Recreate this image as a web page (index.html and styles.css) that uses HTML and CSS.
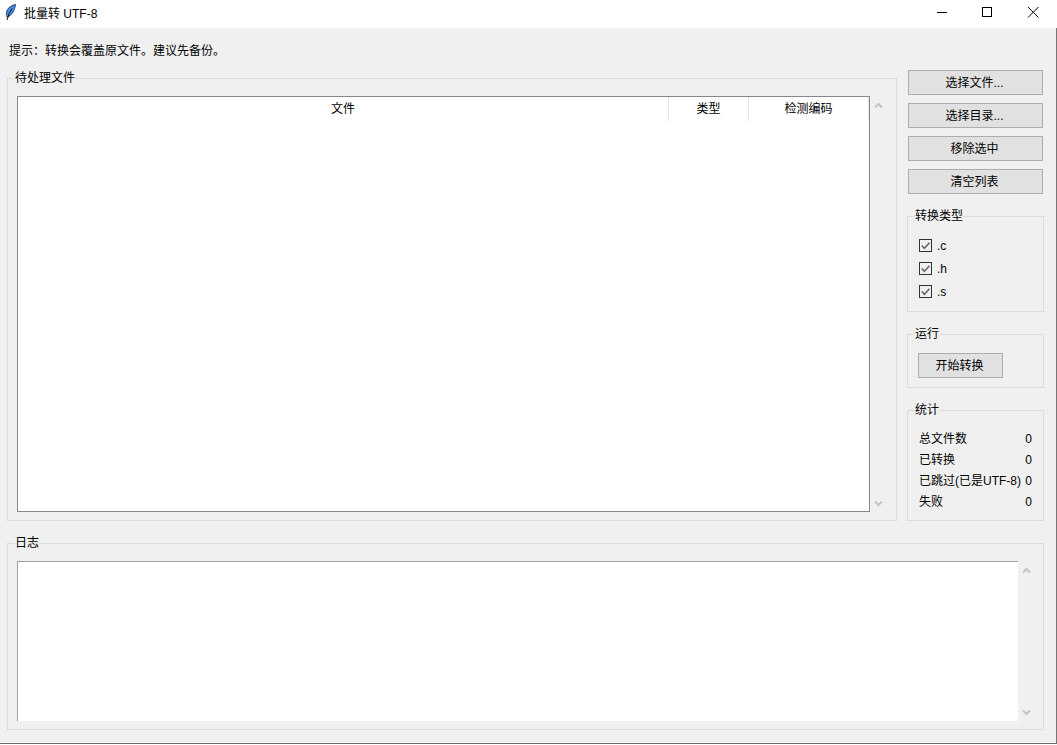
FILE: index.html
```html
<!DOCTYPE html>
<html lang="zh-CN">
<head>
    <meta charset="UTF-8">
    <meta name="viewport" content="width=device-width, initial-scale=1.0">
    <title>批量转 UTF-8</title>
    <link rel="stylesheet" href="styles.css">
</head>
<body>
    <div class="window">
        <div class="titlebar">
            <svg class="app-icon" width="12" height="20" viewBox="0 0 12 20">
                <path d="M10.500 0.500C7 1 2.800 3.500 1.700 7.300C1.200 9.300 1.300 11.300 2 13C4.800 12.300 7.300 10 8.600 7C9.600 4.800 10.300 2.500 10.500 0.500Z" fill="#3f93f2" stroke="#1a2530" stroke-width="0.800"/>
                <path d="M7 4.500L4.200 9.500L2 16" fill="none" stroke="#0b0f14" stroke-width="1"/>
            </svg>
            <span class="title-text">批量转 UTF-8</span>
            <div class="window-controls">
                <svg class="control" width="46" height="28" viewBox="0 0 46 28"><path d="M17 12.500H27" stroke="#000" fill="none"/></svg>
                <svg class="control" width="46" height="28" viewBox="0 0 46 28"><rect x="16.500" y="7.500" width="9" height="9" stroke="#000" fill="none"/></svg>
                <svg class="control" width="46" height="28" viewBox="0 0 46 28"><path d="M16 7L26.500 17.500M26.500 7L16 17.500" stroke="#000" fill="none"/></svg>
            </div>
        </div>

        <div class="content">
            <p class="hint">提示：转换会覆盖原文件。建议先备份。</p>

            <div class="top-row">
                <fieldset class="group files-group">
                    <legend>待处理文件</legend>
                    <div class="list-wrap">
                        <div class="file-table">
                            <div class="table-head">
                                <div class="head-cell">文件</div>
                                <div class="head-cell">类型</div>
                                <div class="head-cell">检测编码</div>
                            </div>
                        </div>
                        <div class="scroll-col">
                            <svg width="9" height="7" viewBox="0 0 9 7"><path d="M1 5.500L4.500 2L8 5.500" fill="none" stroke="#c4c4c4" stroke-width="2"/></svg>
                            <svg width="9" height="7" viewBox="0 0 9 7"><path d="M1 1.500L4.500 5L8 1.500" fill="none" stroke="#c4c4c4" stroke-width="2"/></svg>
                        </div>
                    </div>
                </fieldset>

                <div class="side">
                    <div class="side-buttons">
                        <button class="btn">选择文件...</button>
                        <button class="btn">选择目录...</button>
                        <button class="btn">移除选中</button>
                        <button class="btn">清空列表</button>
                    </div>

                    <fieldset class="group types-group">
                        <legend>转换类型</legend>
                        <label class="check-row">
                            <svg class="check-box" width="13" height="13" viewBox="0 0 13 13"><rect x="0.500" y="0.500" width="12" height="12" fill="none" stroke="#333"/><path d="M2.800 6.500L5.300 9.300L10.500 3.800" fill="none" stroke="#666" stroke-width="1.600"/></svg>
                            <span>.c</span>
                        </label>
                        <label class="check-row">
                            <svg class="check-box" width="13" height="13" viewBox="0 0 13 13"><rect x="0.500" y="0.500" width="12" height="12" fill="none" stroke="#333"/><path d="M2.800 6.500L5.300 9.300L10.500 3.800" fill="none" stroke="#666" stroke-width="1.600"/></svg>
                            <span>.h</span>
                        </label>
                        <label class="check-row">
                            <svg class="check-box" width="13" height="13" viewBox="0 0 13 13"><rect x="0.500" y="0.500" width="12" height="12" fill="none" stroke="#333"/><path d="M2.800 6.500L5.300 9.300L10.500 3.800" fill="none" stroke="#666" stroke-width="1.600"/></svg>
                            <span>.s</span>
                        </label>
                    </fieldset>

                    <fieldset class="group run-group">
                        <legend>运行</legend>
                        <button class="btn btn-start">开始转换</button>
                    </fieldset>

                    <fieldset class="group stats-group">
                        <legend>统计</legend>
                        <div class="stat-row"><span>总文件数</span><span>0</span></div>
                        <div class="stat-row"><span>已转换</span><span>0</span></div>
                        <div class="stat-row"><span>已跳过(已是UTF-8)</span><span>0</span></div>
                        <div class="stat-row"><span>失败</span><span>0</span></div>
                    </fieldset>
                </div>
            </div>

            <fieldset class="group log-group">
                <legend>日志</legend>
                <div class="list-wrap">
                    <div class="log-box"></div>
                    <div class="scroll-col">
                        <svg width="9" height="7" viewBox="0 0 9 7"><path d="M1 5.500L4.500 2L8 5.500" fill="none" stroke="#c4c4c4" stroke-width="2"/></svg>
                        <svg width="9" height="7" viewBox="0 0 9 7"><path d="M1 1.500L4.500 5L8 1.500" fill="none" stroke="#c4c4c4" stroke-width="2"/></svg>
                    </div>
                </div>
            </fieldset>
        </div>
    </div>
</body>
</html>
```

FILE: styles.css
```css
* {
    box-sizing: border-box;
}
html, body {
    margin: 0;
    height: 100%;
    overflow: hidden;
}
body {
    font-family: "Liberation Sans", "Noto Sans CJK SC", sans-serif;
    font-size: 12px;
    color: #000;
    background-color: #fff;
}
.window {
    height: 745px;
    padding-bottom: 1px;
    display: flex;
    flex-direction: column;
}
.titlebar {
    height: 28px;
    flex: none;
    display: flex;
    align-items: center;
    padding-left: 5px;
    background-color: #fff;
}
.app-icon {
    flex: none;
}
.title-text {
    margin-left: 7px;
    line-height: 16px;
    padding-bottom: 1px;
}
.window-controls {
    margin-left: auto;
    margin-right: -1px;
    display: flex;
}
.control {
    display: block;
}
.content {
    flex: 1;
    min-height: 0;
    background-color: #f0f0f0;
    border-right: 1px solid #767676;
    border-bottom: 1px solid #6a6a6a;
    padding: 0 12px 0 7px;
}
.hint {
    margin: 0;
    height: 42px;
    padding: 15px 0 0 2px;
    line-height: 16px;
}
.top-row {
    display: flex;
    gap: 10px;
}
.group {
    margin: 0;
    min-width: 0;
    border: 1px solid #dcdcdc;
    padding: 10px 9px 8px;
}
.group legend {
    padding: 0;
    margin-left: -2px;
    line-height: 16px;
    height: 16px;
}
.files-group {
    flex: 1;
    height: 451px;
}
.list-wrap {
    display: flex;
    height: 100%;
}
.file-table {
    flex: 1;
    min-width: 0;
    background-color: #fff;
    border: 1px solid #828790;
}
.table-head {
    display: grid;
    grid-template-columns: 1fr 80px 120px;
    height: 24px;
}
.head-cell {
    text-align: center;
    line-height: 24px;
    border-right: 1px solid #e5e5e5;
}
.scroll-col {
    width: 17px;
    flex: none;
    display: flex;
    flex-direction: column;
    justify-content: space-between;
    align-items: center;
    padding: 6px 0 5px;
}
.scroll-col svg {
    display: block;
}
.side {
    width: 137px;
    flex: none;
}
.side-buttons {
    display: flex;
    flex-direction: column;
    gap: 8px;
    padding-left: 1px;
    padding-right: 1px;
}
.btn {
    height: 25px;
    padding: 0 2px 0 0;
    font: inherit;
    line-height: 16px;
    color: #000;
    background-color: #e1e1e1;
    border: 1px solid #adadad;
    border-radius: 0;
}
.btn-start {
    display: block;
    width: 85px;
}
.side .group {
    margin-top: 14px;
}
.side .group legend {
    margin-left: -3px;
}
.types-group {
    padding: 10px 11px 8px;
}
.types-group.group legend,
.stats-group.group legend {
    margin-left: -4px;
}
.check-row {
    display: flex;
    align-items: center;
    gap: 5px;
    height: 23px;
    line-height: 16px;
}
.check-box {
    flex: none;
}
.run-group {
    padding: 11px 10px 9px;
}
.stats-group {
    padding: 10px 11px 8px;
}
.stat-row {
    display: flex;
    justify-content: space-between;
    height: 21px;
    line-height: 22px;
    white-space: nowrap;
}
.log-group {
    margin-top: 14px;
    height: 195px;
    padding-right: 8px;
}
.log-box {
    flex: 1;
    background-color: #fff;
    border-top: 1px solid #a0a0a0;
    border-left: 1px solid #a0a0a0;
}
```
